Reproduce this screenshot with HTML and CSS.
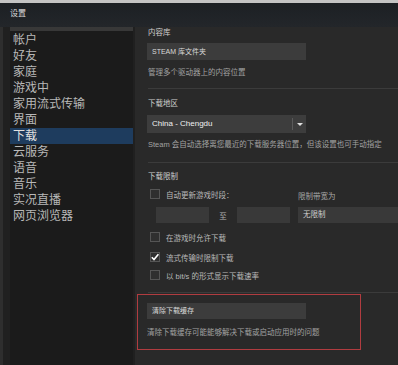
FILE: index.html
```html
<!DOCTYPE html>
<html lang="zh-CN">
<head>
    <meta charset="UTF-8">
    <meta name="viewport" content="width=device-width, initial-scale=1.0">
    <title>设置</title>
    <link rel="stylesheet" href="styles.css">
</head>
<body>
    <div class="ventana">
        <div class="titulo">设置</div>
        <div class="cuerpo">
            <div class="lateral">
                <ul class="menu">
                    <li>帐户</li>
                    <li>好友</li>
                    <li>家庭</li>
                    <li>游戏中</li>
                    <li>家用流式传输</li>
                    <li>界面</li>
                    <li class="activo">下载</li>
                    <li>云服务</li>
                    <li>语音</li>
                    <li>音乐</li>
                    <li>实况直播</li>
                    <li>网页浏览器</li>
                </ul>
            </div>

            <div class="contenido">
                <div class="etiqueta">内容库</div>
                <div class="boton">STEAM 库文件夹</div>
                <div class="nota">管理多个驱动器上的内容位置</div>
                <div class="linea"></div>

                <div class="etiqueta sec">下载地区</div>
                <div class="selector">
                    <span class="selector-texto">China - Chengdu</span>
                    <span class="selector-flecha"></span>
                </div>
                <div class="nota nota-2">Steam 会自动选择离您最近的下载服务器位置，但该设置也可手动指定</div>
                <div class="linea linea-2"></div>

                <div class="etiqueta sec-2">下载限制</div>
                <div class="limites">
                    <div class="col-izq">
                        <div class="fila">
                            <span class="casilla"></span>
                            <span>自动更新游戏时段：</span>
                        </div>
                        <div class="horas">
                            <span class="campo"></span>
                            <span class="hasta">至</span>
                            <span class="campo"></span>
                        </div>
                    </div>
                    <div class="col-der">
                        <div class="fila">限制带宽为</div>
                        <div class="campo ancho">无限制</div>
                    </div>
                </div>
                <div class="fila fila-2">
                    <span class="casilla"></span>
                    <span>在游戏时允许下载</span>
                </div>
                <div class="fila fila-3">
                    <span class="casilla marcada">
                        <svg width="10" height="10" viewBox="0 0 10 10"><path d="M1.8 5.2 L4 7.6 L8.4 2.2" fill="none" stroke="#fff" stroke-width="1.6"/></svg>
                    </span>
                    <span>流式传输时限制下载</span>
                </div>
                <div class="fila fila-4">
                    <span class="casilla"></span>
                    <span>以 bit/s 的形式显示下载速率</span>
                </div>
                <div class="linea linea-3"></div>

                <div class="marco">
                    <div class="boton boton-cache">清除下载缓存</div>
                    <div class="nota nota-3">清除下载缓存可能能够解决下载或启动应用时的问题</div>
                </div>
            </div>
        </div>
    </div>
</body>
</html>
```

FILE: styles.css
```css
body {
    margin: 0;
    width: 398px;
    height: 365px;
    overflow: hidden;
    background-color: #282828;
    font-family: 'Liberation Sans', 'Noto Sans CJK SC', sans-serif;
}
.ventana {
    border-top: 3px solid #c4c4c4;
    height: 362px;
    background-color: #282828;
}
.titulo {
    height: 24px;
    line-height: 22px;
    padding-left: 10px;
    font-size: 8px;
    color: #dcdcdc;
    background: linear-gradient(#1c2024, #23262a);
}
.cuerpo {
    display: flex;
    height: 338px;
}
.lateral {
    width: 123px;
    padding-left: 7px;
    padding-right: 2px;
    border-left: 3px solid #2e2e2e;
    background-color: #202020;
    flex-shrink: 0;
}
.menu {
    list-style: none;
    margin: 0;
    padding: 1px 0 0 0;
    height: 333px;
    border-top: 4px solid #383838;
    background-color: #1b1b1b;
}
.menu li {
    height: 16px;
    line-height: 16px;
    padding-left: 3px;
    font-size: 12px;
    color: #b8b8b8;
}
.menu li.activo {
    background-color: #1e3c5e;
    color: #e0e0e0;
}
.contenido {
    flex: 1;
    padding-left: 13px;
    background-color: #292929;
    overflow: hidden;
}
.etiqueta {
    height: 12px;
    line-height: 12px;
    font-size: 7.5px;
    color: #cfcfcf;
}
.sec {
    margin-top: 9px;
}
.sec-2 {
    margin-top: 8px;
}
.boton {
    width: 154px;
    height: 17px;
    line-height: 17px;
    margin-top: 4px;
    margin-left: -1px;
    padding-left: 5px;
    font-size: 7px;
    color: #d8d8d8;
    background-color: #3c3c3c;
}
.nota {
    height: 12px;
    line-height: 12px;
    margin-top: 7px;
    font-size: 7.5px;
    color: #a2a2a2;
    white-space: nowrap;
}
.nota-2 {
    margin-top: 6px;
}
.linea {
    height: 1px;
    margin-top: 9px;
    background-color: #3b3b3b;
}
.linea-2 {
    margin-top: 11px;
}
.linea-3 {
    margin-top: 11px;
}
.selector {
    display: flex;
    align-items: center;
    width: 159px;
    height: 18px;
    margin-top: 5px;
    margin-left: -1px;
    background-color: #3d3d3d;
}
.selector-texto {
    flex: 1;
    padding-left: 5px;
    font-size: 8px;
    color: #f0f0f0;
    border-right: 1px solid #5a5a5a;
    line-height: 12px;
}
.selector-flecha {
    width: 13px;
    display: flex;
    justify-content: center;
}
.selector-flecha::before {
    content: '';
    border-left: 3px solid transparent;
    border-right: 3px solid transparent;
    border-top: 3px solid #e0e0e0;
}
.limites {
    display: flex;
    margin-top: 5px;
}
.col-izq {
    width: 175px;
}
.col-der {
    flex-shrink: 0;
}
.fila {
    display: flex;
    align-items: center;
    gap: 6px;
    height: 12px;
    padding-left: 2px;
    font-size: 7.5px;
    color: #b9b9b9;
    white-space: nowrap;
}
.col-der .fila {
    padding-left: 0;
    margin-top: 1px;
    color: #a8a8a8;
}
.fila-2 {
    margin-top: 8px;
}
.fila-3 {
    margin-top: 8px;
}
.fila-4 {
    margin-top: 6px;
}
.casilla {
    width: 8px;
    height: 8px;
    border: 1px solid #555;
    background-color: #2f2f2f;
    flex-shrink: 0;
    position: relative;
}
.casilla svg {
    position: absolute;
    left: -1px;
    top: -1px;
}
.horas {
    display: flex;
    align-items: center;
    margin-top: 7px;
    padding-left: 8px;
}
.campo {
    display: block;
    width: 53px;
    height: 16px;
    background-color: #393939;
}
.hasta {
    width: 28px;
    text-align: center;
    font-size: 7.5px;
    color: #b0b0b0;
}
.campo.ancho {
    width: 95px;
    height: 16px;
    line-height: 16px;
    margin-top: 6px;
    padding-left: 5px;
    font-size: 7.5px;
    color: #d0d0d0;
}
.marco {
    width: 214px;
    height: 46px;
    margin-top: 1px;
    margin-left: -11px;
    padding-left: 8px;
    padding-top: 8px;
    border: 1px solid #b13c40;
}
.boton-cache {
    height: 16px;
    line-height: 16px;
    margin-top: 0;
    margin-left: 1px;
}
.nota-3 {
    margin-top: 8px;
    margin-left: 1px;
}
```
